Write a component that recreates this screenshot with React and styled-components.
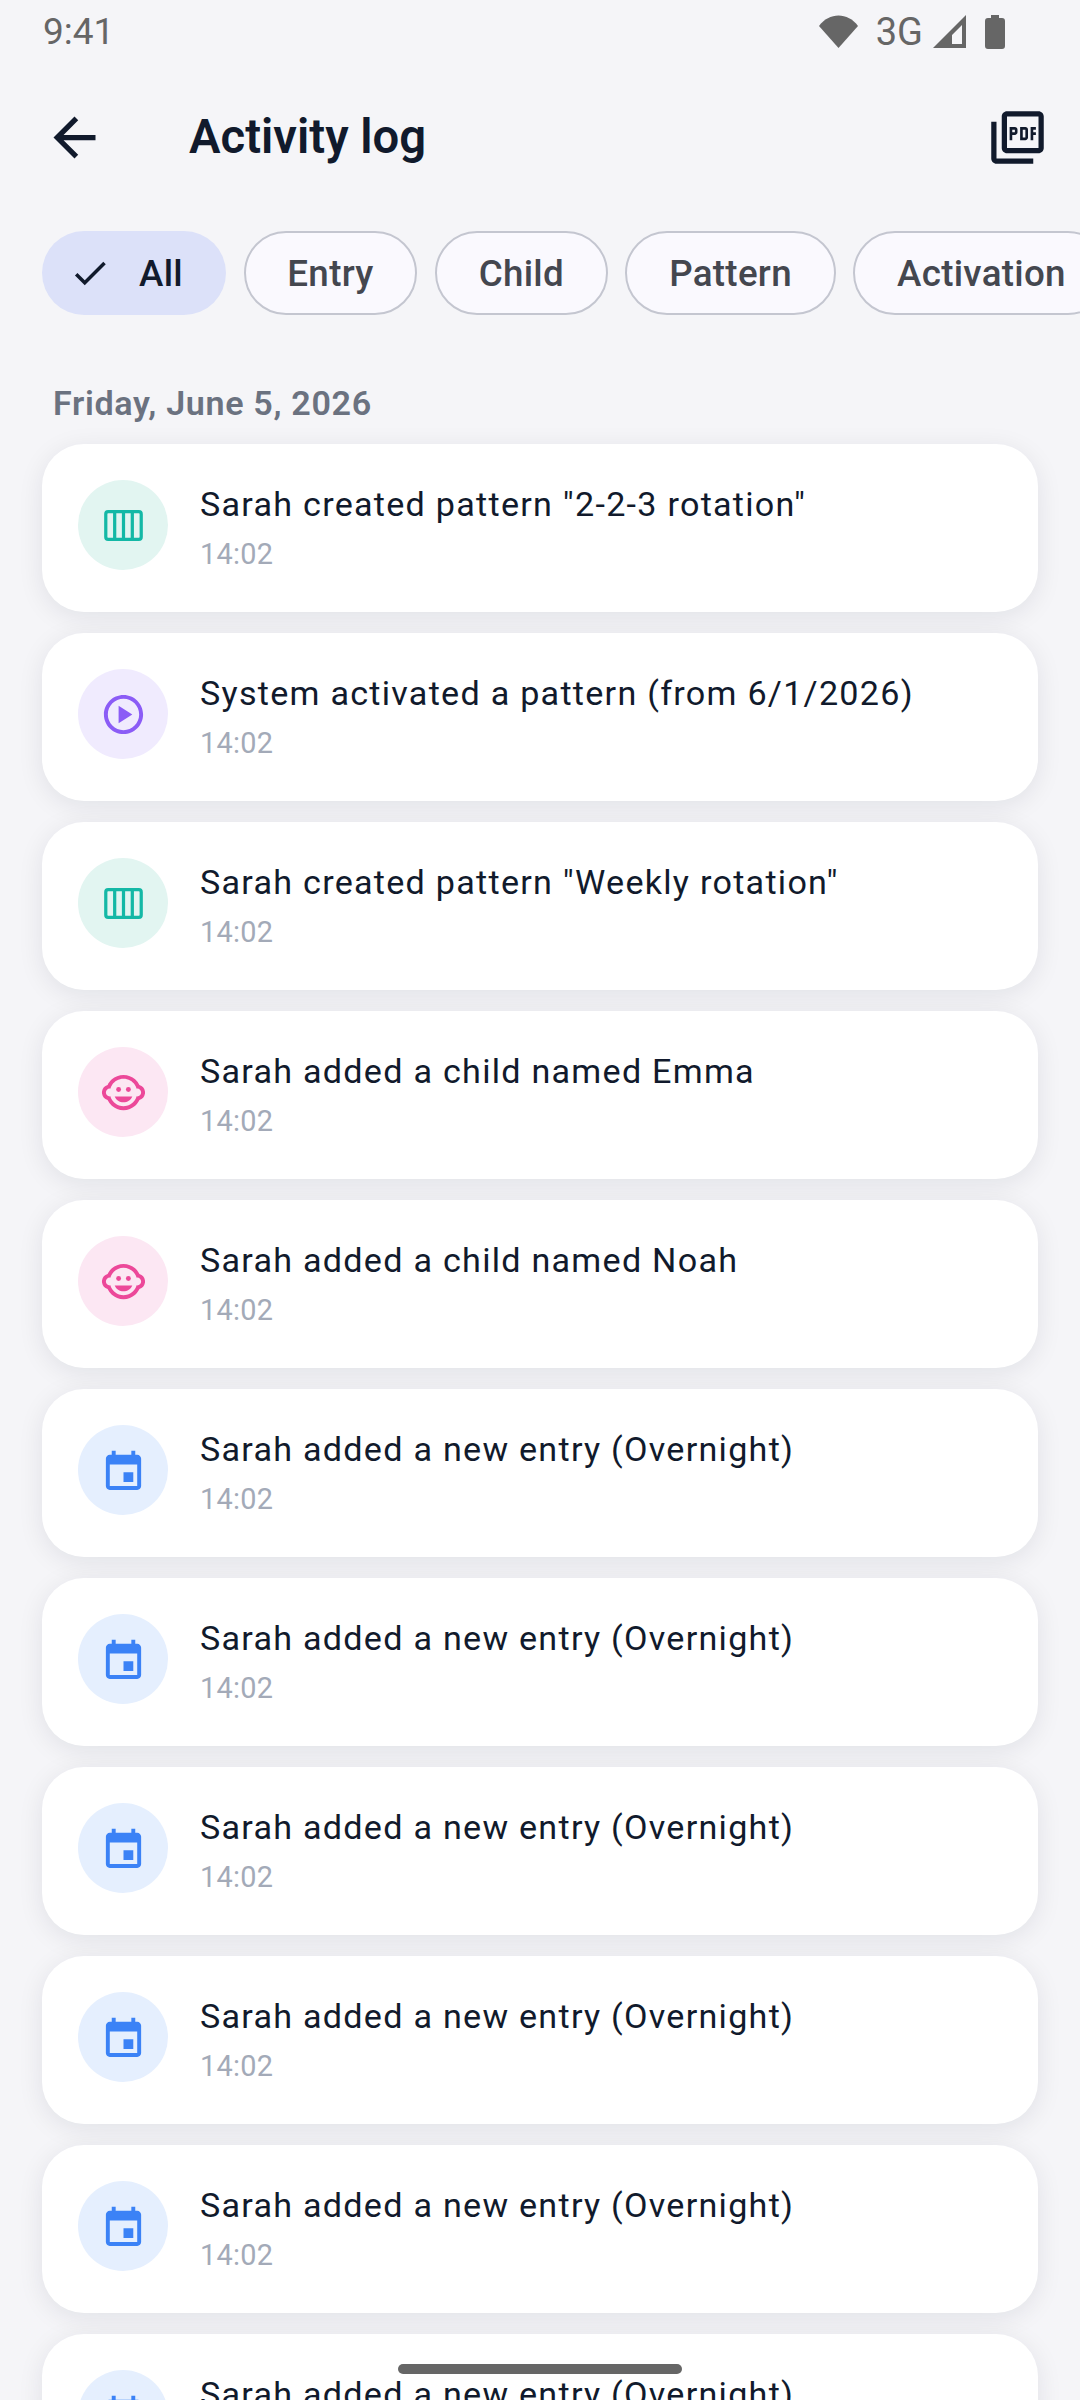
import React from "react";
import styled, { createGlobalStyle } from "styled-components";
import {
  MdArrowBack,
  MdCheck,
  MdOutlinePictureAsPdf,
  MdOutlinePlayCircle,
  MdOutlineChildCare,
} from "react-icons/md";

const GlobalStyle = createGlobalStyle`
  html, body {
    margin: 0;
    padding: 0;
    background: #f5f5f8;
  }
  body {
    font-family: Roboto, "Liberation Sans", sans-serif;
  }
`;

const Screen = styled.div`
  width: 1080px;
  height: 2400px;
  overflow: hidden;
  position: relative;
  background: #f5f5f8;
`;

const StatusBar = styled.div`
  height: 63px;
  padding: 0 75px 0 43px;
  display: flex;
  align-items: center;
  justify-content: space-between;
  color: #666;
  font-size: 37px;
`;

const StatusIcons = styled.div`
  display: flex;
  align-items: center;
`;

const Network = styled.span`
  margin: 0 10px 0 18px;
  font-size: 38px;
`;

const Battery = styled.svg`
  margin-left: 19px;
`;

const TopBar = styled.header`
  height: 84px;
  margin-top: 32px;
  padding: 0 31px 0 43px;
  display: flex;
  align-items: center;
  color: #111a2c;
`;

const Title = styled.h1`
  flex: 1;
  margin: 0 0 0 83px;
  font-size: 47.25px;
  font-weight: 600;
`;

const Filters = styled.div`
  margin-top: 52px;
  padding-left: 42px;
  display: flex;
  gap: 17.5px;
`;

const Chip = styled.div`
  height: 84px;
  box-sizing: border-box;
  flex: none;
  display: flex;
  align-items: center;
  gap: 28px;
  padding: ${(p) => (p.$active ? "0 43px 0 27px" : "0 41.8px")};
  border-radius: 42px;
  border: ${(p) => (p.$active ? "none" : "2.6px solid #c4c6d0")};
  background: ${(p) => (p.$active ? "#dce1f9" : "#faf9fe")};
  color: ${(p) => (p.$active ? "#111a2c" : "#44474f")};
  font-size: 36.75px;
  font-weight: 500;
  letter-spacing: 0.3px;
`;

const DateLabel = styled.div`
  margin: 67px 0 0 53px;
  height: 42px;
  line-height: 42px;
  color: #6b7280;
  font-size: 34.125px;
  font-weight: 600;
  letter-spacing: 0.66px;
`;

const List = styled.div`
  margin-top: 20px;
  padding: 0 42px;
  display: flex;
  flex-direction: column;
  gap: 21px;
`;

const Card = styled.div`
  height: 168px;
  flex: none;
  box-sizing: border-box;
  padding: 36px;
  display: flex;
  gap: 32px;
  background: #fff;
  border-radius: 42px;
  box-shadow: 0 5px 26px rgba(15, 23, 42, 0.085);
`;

const IconCircle = styled.div`
  width: 90px;
  height: 90px;
  flex: none;
  border-radius: 50%;
  display: flex;
  align-items: center;
  justify-content: center;
  background: ${(p) => p.$bg};
  color: ${(p) => p.$fg};
`;

const Message = styled.div`
  color: #111a2c;
  font-size: 34.125px;
  line-height: 49px;
  letter-spacing: 1.26px;
`;

const Time = styled.div`
  margin-top: 3px;
  color: #a3aab8;
  font-size: 28.875px;
  line-height: 44px;
  letter-spacing: 0.3px;
`;

const GestureBar = styled.div`
  position: absolute;
  left: 398px;
  top: 2364px;
  width: 284px;
  height: 10px;
  border-radius: 5px;
  background: #666;
`;

const PatternIcon = () => (
  <svg width="47" height="47" viewBox="0 0 24 24" fill="none" stroke="currentColor" strokeWidth="1.65">
    <rect x="2.95" y="4.9" width="18.1" height="14.2" rx="1.2" />
    <path d="M7.5 5v14M12 5v14M16.5 5v14" />
  </svg>
);

// calendar sits centred in its circle in the reference, so the box starts a bit higher
const CalendarIcon = () => (
  <svg width="47" height="47" viewBox="0 -0.9 24 24" fill="currentColor">
    <path d="M17 12h-5v5h5v-5zM16 1v2H8V1H6v2H5c-1.11 0-1.99.9-1.99 2L3 19c0 1.1.89 2 2 2h14c1.1 0 2-.9 2-2V5c0-1.1-.9-2-2-2h-1V1h-2zm3 18H5V8h14v11z" />
  </svg>
);

const kinds = {
  pattern: { bg: "#e2f5f1", fg: "#14b8a6", icon: <PatternIcon /> },
  activation: { bg: "#f0ebfe", fg: "#8b5cf6", icon: <MdOutlinePlayCircle size={47} /> },
  child: { bg: "#fce7f3", fg: "#ec4899", icon: <MdOutlineChildCare size={47} /> },
  entry: { bg: "#e5effe", fg: "#3b82f6", icon: <CalendarIcon /> },
};

const entry = { kind: "entry", text: "Sarah added a new entry (Overnight)" };

const rows = [
  { kind: "pattern", text: 'Sarah created pattern "2-2-3 rotation"' },
  { kind: "activation", text: "System activated a pattern (from 6/1/2026)" },
  { kind: "pattern", text: 'Sarah created pattern "Weekly rotation"' },
  { kind: "child", text: "Sarah added a child named Emma" },
  { kind: "child", text: "Sarah added a child named Noah" },
  entry,
  entry,
  entry,
  entry,
  entry,
  entry,
];

const filters = ["Entry", "Child", "Pattern", "Activation"];

export default function App() {
  return (
    <Screen>
      <GlobalStyle />
      <StatusBar>
        <span>9:41</span>
        <StatusIcons>
          <svg width="39" height="33" viewBox="0 0 39 33" fill="#666">
            <path d="M0 11 C10 -3 29 -3 39 11 L19.5 33 Z" />
          </svg>
          <Network>3G</Network>
          <svg width="33" height="33" viewBox="0 0 33 33">
            <path d="M0 33 L33 0 V33 Z M19 29 H29 V10 L19 20 Z" fill="#666" fillRule="evenodd" />
          </svg>
          <Battery width="20" height="34" viewBox="0 0 20 34" fill="#666">
            <path d="M6 0 H14 V3 H17 Q20 3 20 6 V31 Q20 34 17 34 H3 Q0 34 0 31 V6 Q0 3 3 3 H6 Z" />
          </Battery>
        </StatusIcons>
      </StatusBar>

      <TopBar>
        <MdArrowBack size={63} />
        <Title>Activity log</Title>
        <MdOutlinePictureAsPdf size={63} />
      </TopBar>

      <Filters>
        <Chip $active>
          <MdCheck size={42} />
          All
        </Chip>
        {filters.map((f) => (
          <Chip key={f}>{f}</Chip>
        ))}
      </Filters>

      <DateLabel>Friday, June 5, 2026</DateLabel>

      <List>
        {rows.map((row, i) => {
          const kind = kinds[row.kind];
          return (
            <Card key={i}>
              <IconCircle $bg={kind.bg} $fg={kind.fg}>
                {kind.icon}
              </IconCircle>
              <div>
                <Message>{row.text}</Message>
                <Time>14:02</Time>
              </div>
            </Card>
          );
        })}
      </List>

      <GestureBar />
    </Screen>
  );
}
